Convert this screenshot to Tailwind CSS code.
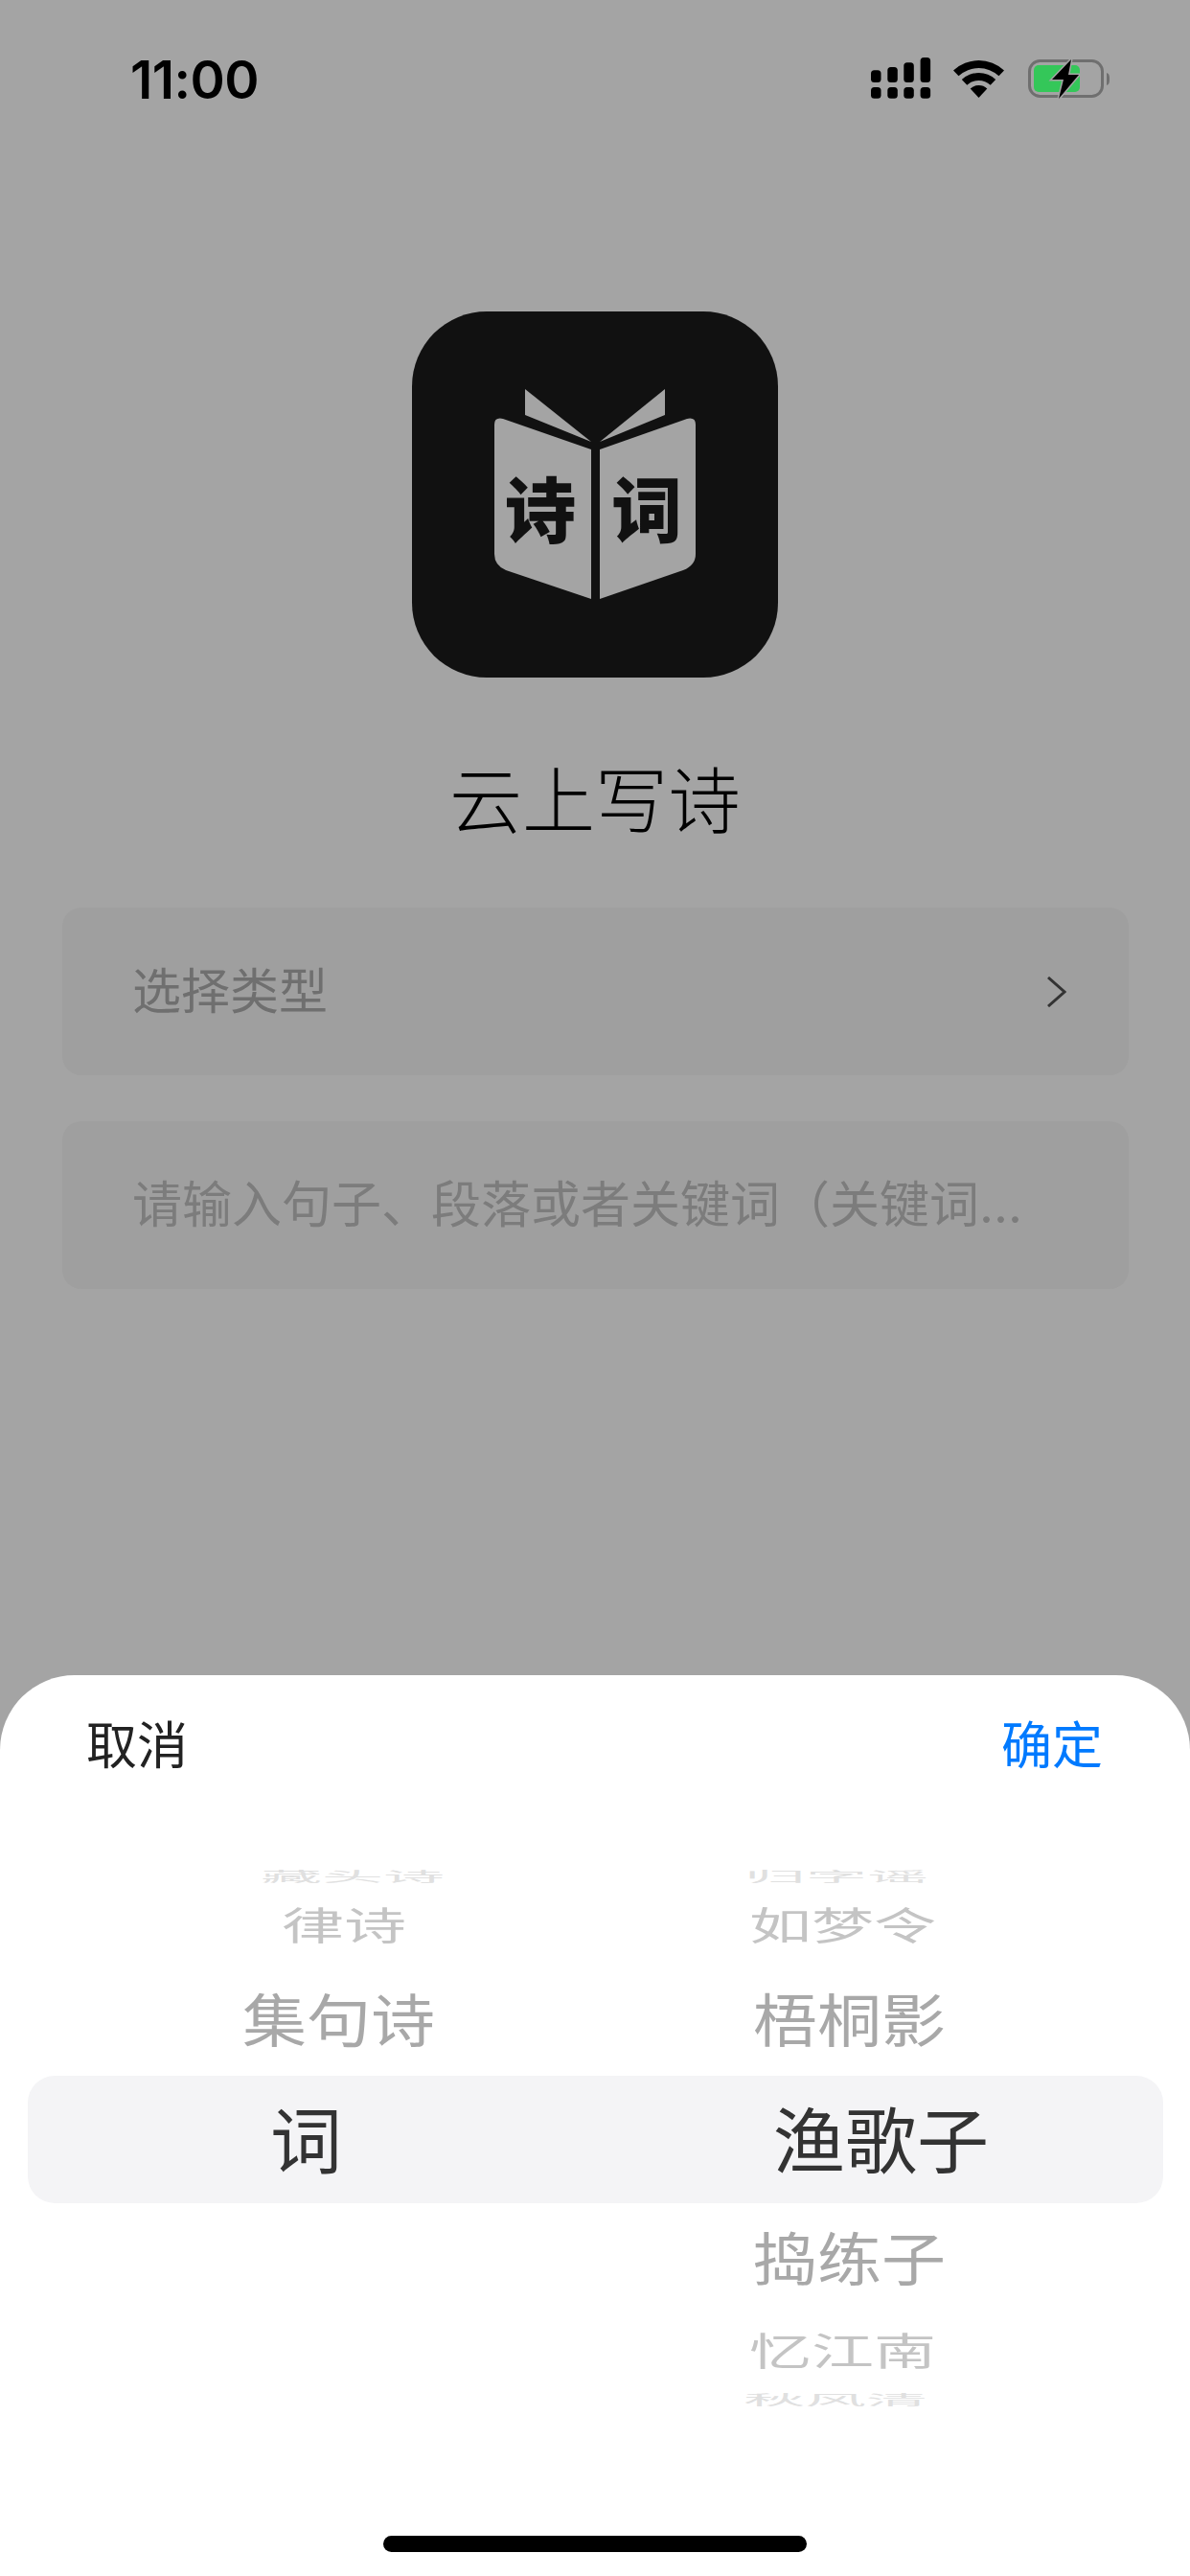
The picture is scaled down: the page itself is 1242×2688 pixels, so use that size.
<!DOCTYPE html>
<html lang="zh-CN">
<head>
    <meta charset="UTF-8">
    <meta name="viewport" content="width=device-width, initial-scale=1.0">
    <script src="https://cdn.jsdelivr.net/npm/@tailwindcss/browser@4"></script>
    <title>云上写诗</title>
</head>
<body class="bg-[#a4a4a4]">
    <div class="relative w-[1242px] h-[2688px] overflow-hidden bg-[#a4a4a4] font-['Noto_Sans_CJK_SC',sans-serif]">
        <!-- status bar -->
        <div class="flex justify-between h-[130px] pt-[60px] pl-[136px] pr-[84px]">
            <div class="font-['Inter',sans-serif] font-semibold text-[55px] leading-[46px] tracking-[-.5px] text-black">11:00</div>
            <div class="flex items-start">
                <svg class="w-[63px] h-[43px]" viewBox="0 0 63 43" fill="#000">
                    <rect x="0" y="13.3" width="10.5" height="12.7" rx="3.5"/>
                    <rect x="17.3" y="10" width="10.5" height="16" rx="3.5"/>
                    <rect x="34.3" y="5.3" width="10.5" height="20.7" rx="3.5"/>
                    <rect x="51.6" y="0" width="10.5" height="26" rx="3.5"/>
                    <rect x="0" y="31" width="10.5" height="11.7" rx="3.5"/>
                    <rect x="17.3" y="31" width="10.5" height="11.7" rx="3.5"/>
                    <rect x="34.3" y="31" width="10.5" height="11.7" rx="3.5"/>
                    <rect x="51.6" y="31" width="10.5" height="11.7" rx="3.5"/>
                </svg>
                <svg class="w-[53px] h-[39px] ml-[23px] mt-[3px]" viewBox="0 0 53 39" fill="#000">
                    <path d="M0 10.4A39 39 0 0 1 53 10.4L47.5 16.3A31 31 0 0 0 5.5 16.3Z"/>
                    <path d="M8.8 20A26 26 0 0 1 44.2 20L38.7 25.8A18 18 0 0 0 14.3 25.8Z"/>
                    <path d="M17.7 29.5A13 13 0 0 1 35.3 29.5L26.5 39Z"/>
                </svg>
                <svg class="w-[85px] h-[45px] ml-[25px]" viewBox="0 0 85 45">
                    <rect x="1.5" y="3.5" width="76" height="37" rx="11" fill="none" stroke="#6f6f6f" stroke-width="3"/>
                    <path d="M82 16C85 17 85 20 85 22.5S85 28 82 29Z" fill="#6f6f6f"/>
                    <rect x="6" y="8" width="48" height="28" rx="5" fill="#34c759"/>
                    <path d="M45 2L25 23H37L32 43L53 18H42Z" fill="#000" stroke="#a4a4a4" stroke-width="3" paint-order="stroke"/>
                </svg>
            </div>
        </div>

        <!-- logo -->
        <div class="mt-[195px] ml-[430px] w-[382px] h-[382px] rounded-[78px] bg-[#111111]">
            <svg class="w-full h-full" viewBox="0 0 382 382">
                <path d="M118 81L187 136L118 108Z" fill="#a4a4a4"/>
                <path d="M264 81L196 136L264 108Z" fill="#a4a4a4"/>
                <path d="M86 118Q86 110 95 112L187 144V300L98 270Q86 265 86 253Z" fill="#a4a4a4"/>
                <path d="M296 118Q296 110 287 112L196 144V300L283 270Q296 265 296 253Z" fill="#a4a4a4"/>
                <text x="97" y="235" font-size="74" font-weight="900" fill="#111111">诗</text>
                <text x="208" y="235" font-size="74" font-weight="900" fill="#111111">词</text>
            </svg>
        </div>

        <h1 class="mt-[87px] text-center text-[76px] leading-[75px] font-light text-black">云上写诗</h1>

        <!-- form -->
        <div class="mt-[78px] ml-[65px] w-[1113px] flex flex-col gap-[48px]">
            <div class="h-[175px] pb-[6px] rounded-[20px] bg-[#9f9f9f] flex items-center justify-between pl-[73px] pr-[65px]">
                <span class="text-[51px] leading-none text-[#6f6f6f]">选择类型</span>
                <svg class="w-[20px] h-[32px] mt-[6px]" viewBox="0 0 20 32" fill="none" stroke="#333333" stroke-width="3"><path d="M1 1L18 16L1 31"/></svg>
            </div>
            <div class="h-[175px] pb-[3px] rounded-[20px] bg-[#9f9f9f] flex items-center pl-[73px]">
                <span class="text-[52px] leading-none text-[#7c7c7c] whitespace-nowrap">请输入句子、段落或者关键词（关键词<span class="font-['Inter',sans-serif]">...</span></span>
            </div>
        </div>

        <!-- picker sheet -->
        <div class="absolute inset-x-0 bottom-0 h-[940px] rounded-t-[78px] bg-white">
            <div class="flex justify-between pl-[90px] pr-[91px] pt-[42px] h-[196px] text-[53px] leading-[56px]">
                <span class="text-[#222222]">取消</span>
                <span class="text-[#007aff]">确定</span>
            </div>
            <div class="relative grid grid-cols-2 h-[574px]">
                <div class="absolute left-[29px] right-[28px] top-[222px] h-[133px] rounded-[28px] bg-[#f4f4f6]"></div>
                <div class="relative flex flex-col leading-none">
                    <div class="h-[25px] flex items-center pl-[272px] text-[64px] text-[#e0e0e0] scale-y-[.22]">藏头诗</div>
                    <div class="h-[76px] flex items-center pl-[294px] text-[65px] text-[#c4c4c4] scale-y-[.62]">律诗</div>
                    <div class="h-[118px] flex items-center pl-[253px] text-[67px] text-[#a8a8a8] scale-y-[.9]">集句诗</div>
                    <div class="h-[133px] flex items-center pl-[282px] text-[75px] text-[#333333]">词</div>
                </div>
                <div class="relative flex flex-col leading-none">
                    <div class="h-[25px] flex items-center pl-[156px] text-[64px] text-[#e0e0e0] scale-y-[.22]">归字谣</div>
                    <div class="h-[76px] flex items-center pl-[161px] text-[65px] text-[#c4c4c4] scale-y-[.62]">如梦令</div>
                    <div class="h-[118px] flex items-center pl-[165px] text-[67px] text-[#a8a8a8] scale-y-[.9]">梧桐影</div>
                    <div class="h-[133px] flex items-center pl-[186px] text-[75px] text-[#333333]">渔歌子</div>
                    <div class="h-[115px] flex items-center pl-[165px] text-[67px] text-[#a8a8a8] scale-y-[.9]">捣练子</div>
                    <div class="h-[80px] flex items-center pl-[161px] text-[65px] text-[#c4c4c4] scale-y-[.62]">忆江南</div>
                    <div class="h-[24px] flex items-center pl-[155px] text-[64px] text-[#e0e0e0] scale-y-[.22]">秋风清</div>
                </div>
            </div>
            <div class="mt-[128px] ml-[400px] w-[442px] h-[17px] rounded-full bg-black"></div>
        </div>
    </div>
</body>
</html>
